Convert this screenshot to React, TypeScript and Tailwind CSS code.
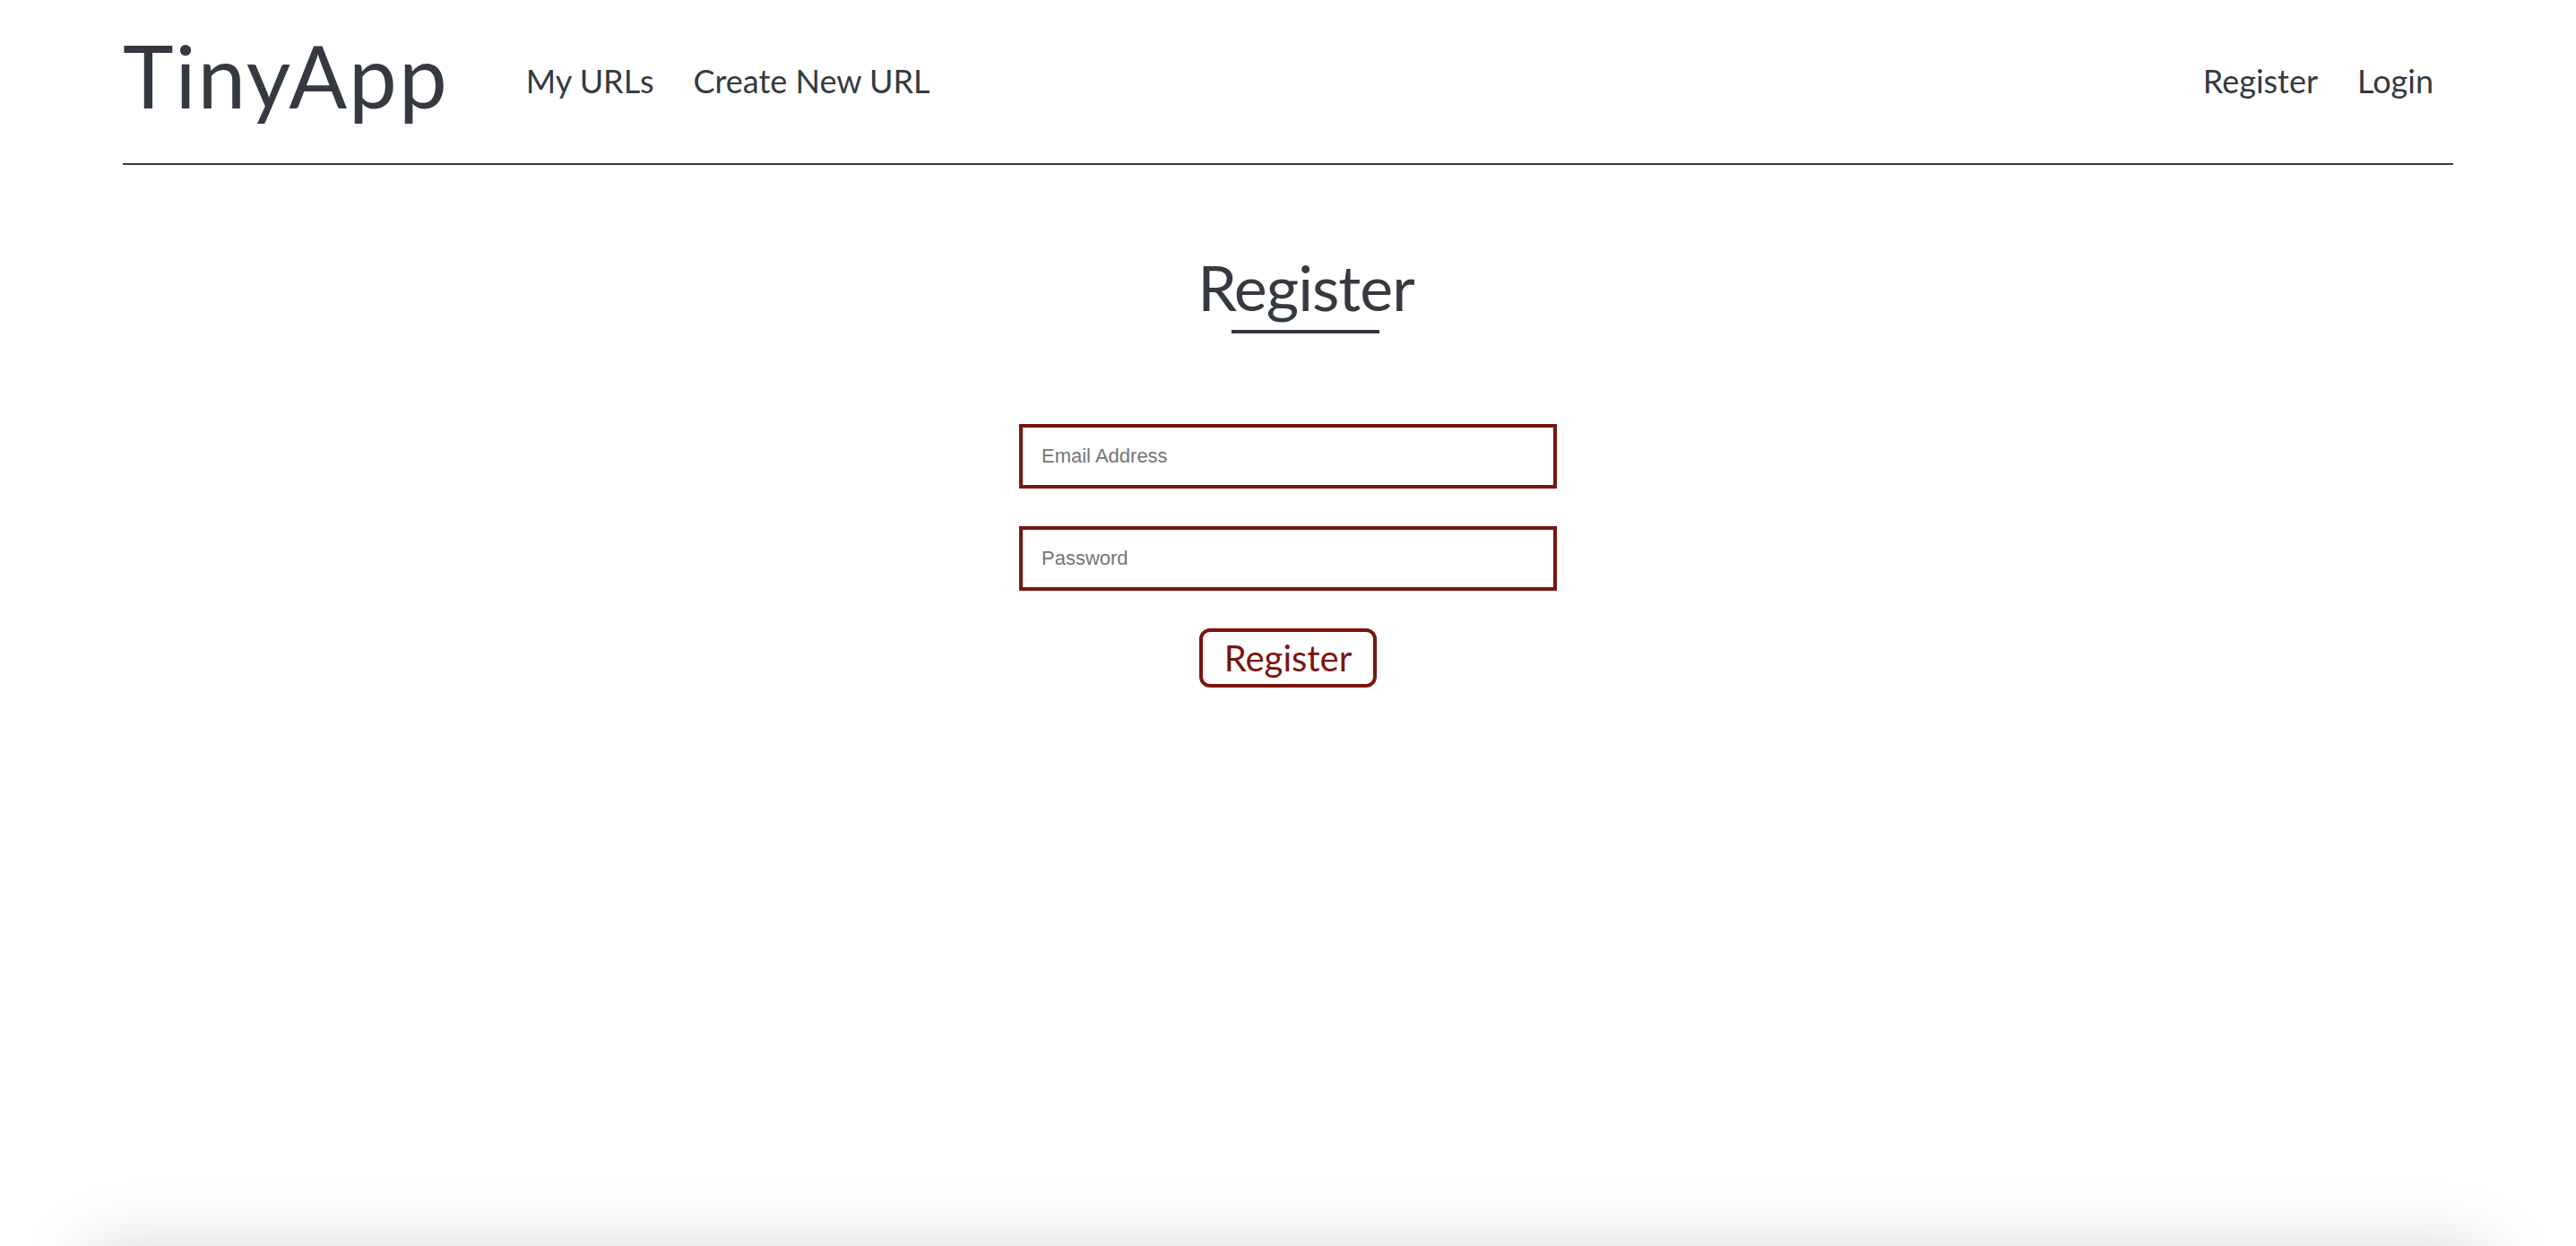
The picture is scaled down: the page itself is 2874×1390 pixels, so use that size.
import React from 'react';

const NavLink: React.FC<{ label: string }> = ({ label }) => (
  <a href="#" className="px-[22px] text-[36px] leading-none text-[#343a40] whitespace-nowrap">
    {label}
  </a>
);

const Field: React.FC<{ placeholder: string; type?: string }> = ({ placeholder, type = 'text' }) => (
  <input
    type={type}
    placeholder={placeholder}
    className="w-[600px] h-[72px] border-4 border-[#7a150f] bg-white pl-[21px] text-[22px] text-[#333] placeholder:text-[#757575] font-['Liberation_Sans',sans-serif] outline-none"
  />
);

export default function App() {
  return (
    <div className="h-[1390px] overflow-hidden bg-white font-['Lato',sans-serif] text-[#343a40] flex flex-col">
      <div className="px-[137px]">
        <header className="h-[184px] border-b-2 border-[#343a40] pt-[36px] flex items-start">
          <a href="#" className="text-[96px] leading-none font-normal tracking-[2px] text-[#343a40]">
            TinyApp
          </a>
          <nav className="ml-[64px] mt-[36px] flex">
            <NavLink label="My URLs" />
            <NavLink label="Create New URL" />
          </nav>
          <nav className="ml-auto mt-[36px] flex">
            <NavLink label="Register" />
            <NavLink label="Login" />
          </nav>
        </header>

        <main className="flex flex-col items-center">
          <div className="mt-[101px] ml-[40px] flex flex-col items-center">
            <h2 className="text-[70px] leading-none tracking-[-1px]">Register</h2>
            <div className="mt-[13px] w-[165px] h-[4px] bg-[#343a40]" />
          </div>

          <form className="mt-[101px] flex flex-col items-center gap-[42px]" onSubmit={(e) => e.preventDefault()}>
            <Field placeholder="Email Address" type="email" />
            <Field placeholder="Password" type="password" />
            <button
              type="submit"
              className="w-[198px] h-[66px] border-4 border-[#7a150f] rounded-[12px] bg-white text-[40px] leading-none text-[#7a150f]"
            >
              Register
            </button>
          </form>
        </main>
      </div>

      <footer className="mt-auto mx-[100px] shrink-0 h-[120px] translate-y-[125px] bg-white shadow-[0_0_80px_rgba(0,0,0,0.18)]" />
    </div>
  );
}
